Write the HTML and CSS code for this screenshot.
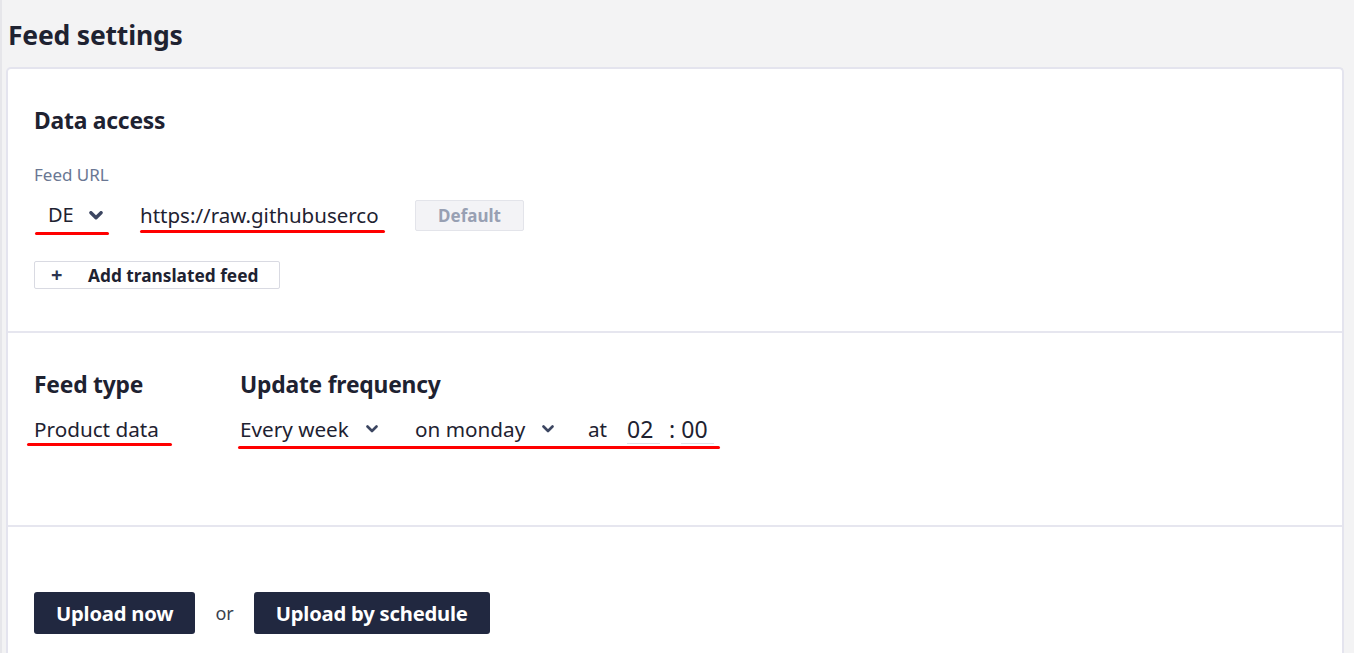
FILE: index.html
```html
<!DOCTYPE html>
<html lang="en">
<head>
<meta charset="utf-8">
<title>Feed settings</title>
<link rel="stylesheet" href="styles.css">
</head>
<body>
<div class="page">
  <h1 class="page-title">Feed settings</h1>
  <div class="card">
    <section class="section section-access">
      <h2 class="section-title">Data access</h2>
      <div class="field-label">Feed URL</div>
      <div class="url-row">
        <div class="select lang-select mark">
          <span class="select-text">DE</span>
          <svg class="chev" viewBox="0 0 12 8" width="14" height="9"><path d="M1.5 1.5 L6 6 L10.5 1.5" fill="none" stroke="currentColor" stroke-width="3" stroke-linecap="round" stroke-linejoin="round"/></svg>
        </div>
        <div class="url-input mark"><input class="url-field" type="text" value="https://raw.githubusercontent.com/feeds/products_de.xml" readonly aria-label="Feed URL"></div>
        <button class="btn-default" type="button">Default</button>
      </div>
      <button class="btn-add" type="button"><span class="plus">+</span>Add translated feed</button>
    </section>
    <section class="section section-type">
      <div class="type-grid">
        <div class="type-col">
          <h2 class="section-title">Feed type</h2>
          <div class="value-row"><span class="value mark mark-type">Product data</span></div>
        </div>
        <div class="freq-col">
          <h2 class="section-title">Update frequency</h2>
          <div class="value-row freq-row mark mark-freq">
            <div class="select freq-select">
              <span class="value">Every week</span>
              <svg class="chev chev-sm" viewBox="0 0 12 8" width="12" height="8"><path d="M1.5 1.5 L6 6 L10.5 1.5" fill="none" stroke="currentColor" stroke-width="2.6" stroke-linecap="round" stroke-linejoin="round"/></svg>
            </div>
            <div class="select day-select">
              <span class="value">on monday</span>
              <svg class="chev chev-sm" viewBox="0 0 12 8" width="12" height="8"><path d="M1.5 1.5 L6 6 L10.5 1.5" fill="none" stroke="currentColor" stroke-width="2.6" stroke-linecap="round" stroke-linejoin="round"/></svg>
            </div>
            <span class="value at">at</span>
            <span class="time-box">02</span>
            <span class="colon">:</span>
            <span class="time-box time-box-min">00</span>
          </div>
        </div>
      </div>
    </section>
    <section class="section section-actions">
      <div class="actions">
        <button class="btn-primary" type="button">Upload now</button>
        <span class="or">or</span>
        <button class="btn-primary" type="button">Upload by schedule</button>
      </div>
    </section>
  </div>
</div>
</body>
</html>
```
FILE: styles.css
```css
* { box-sizing: border-box; }

html, body {
  margin: 0;
  padding: 0;
  height: 100%;
}

body {
  background: #f3f3f4;
  font-family: "Noto Sans", "Open Sans", sans-serif;
  color: #1e2231;
  overflow: hidden;
  border-left: 2px solid #e6e6ea;
}

.page {
  padding: 0 10px 0 4px;
}

.page-title {
  margin: 0;
  padding: 17px 0 0 2px;
  height: 67px;
  font-size: 26.5px;
  line-height: 36px;
  font-weight: 700;
  letter-spacing: -0.2px;
}

.card {
  background: #ffffff;
  border: 2px solid #e4e4ee;
  border-bottom: none;
  border-radius: 5px 5px 0 0;
  height: 600px;
}

.section {
  padding-left: 26px;
  padding-right: 26px;
}

.section + .section {
  border-top: 2px solid #e6e6ef;
}

.section-access {
  padding-top: 38px;
  height: 262px;
}

.section-title {
  margin: 0;
  font-size: 22.8px;
  line-height: 28px;
  font-weight: 700;
  letter-spacing: -0.2px;
}

.field-label {
  margin-top: 30px;
  font-size: 17px;
  line-height: 20px;
  color: #6a7793;
}

.url-row {
  margin-top: 14px;
  display: flex;
  align-items: center;
  height: 32px;
}

.mark {
  position: relative;
}

.mark::after {
  content: "";
  position: absolute;
  left: 0;
  right: 0;
  bottom: -6px;
  height: 3px;
  border-radius: 2px;
  background: #ff0000;
}

.select {
  display: flex;
  align-items: center;
  color: #1e2231;
}

.chev {
  color: #3c4661;
  flex: none;
}

.lang-select {
  width: 76px;
  height: 32px;
  padding-left: 14px;
  font-size: 20px;
  line-height: 24px;
}

.lang-select .chev {
  margin-left: 15px;
}

.lang-select.mark::after {
  left: 1px;
  right: 1px;
  bottom: -4px;
}

.url-input {
  margin-left: 30px;
  width: 245px;
  height: 32px;
  display: flex;
  align-items: center;
}

.url-field {
  display: block;
  width: 238px;
  height: 28px;
  padding: 0;
  border: none;
  outline: none;
  background: transparent;
  font-family: inherit;
  font-size: 20.5px;
  line-height: 28px;
  color: #1e2231;
}

.url-input.mark::after {
  bottom: -2px;
}

.btn-default {
  margin-left: 30px;
  width: 109px;
  height: 31px;
  background: #f3f3f6;
  border: 1px solid #e3e4ea;
  border-radius: 2px;
  font-family: inherit;
  font-size: 17px;
  font-weight: 700;
  color: #98a0b3;
  padding: 0;
}

.btn-add {
  margin-top: 30px;
  display: flex;
  align-items: center;
  width: 246px;
  height: 28px;
  padding: 0 0 0 16px;
  background: #ffffff;
  border: 1px solid #d9dae2;
  border-radius: 2px;
  font-family: inherit;
  font-size: 17.3px;
  font-weight: 700;
  color: #1e2231;
}

.btn-add .plus {
  width: 37px;
  text-align: left;
  font-size: 20px;
  line-height: 20px;
  color: #2d3550;
}

.section-type {
  padding-top: 38px;
  height: 194px;
}

.type-grid {
  display: flex;
}

.type-col {
  width: 206px;
}

.value-row {
  margin-top: 16px;
  display: flex;
  align-items: center;
  height: 28px;
}

.value {
  font-size: 20.7px;
  line-height: 28px;
  color: #1e2231;
}

.mark-type::after {
  left: -7px;
  right: -13px;
  bottom: -3px;
}

.freq-row {
  width: 476px;
}

.mark-freq::after {
  left: -2px;
  right: -4px;
  bottom: -6px;
}

.freq-select {
  width: 175px;
}

.freq-select .chev,
.day-select .chev {
  margin-left: 17px;
}

.day-select {
  width: 173px;
}

.time-box {
  margin-left: 20px;
  width: 33px;
  font-size: 23px;
  line-height: 28px;
  border-bottom: 1px solid #dfe0e8;
  color: #1e2231;
}

.time-box-min {
  margin-left: 6px;
}

.colon {
  margin-left: 9px;
  font-size: 23px;
  line-height: 28px;
}

.section-actions {
  padding-top: 65px;
}

.actions {
  display: flex;
  align-items: center;
}

.btn-primary {
  height: 42px;
  padding: 0 22px;
  background: #212840;
  color: #ffffff;
  border: none;
  border-radius: 3px;
  font-family: inherit;
  font-size: 20.2px;
  font-weight: 700;
  letter-spacing: -0.2px;
}

.or {
  margin: 0 20px;
  font-size: 18px;
  color: #3a3f4e;
}
```
